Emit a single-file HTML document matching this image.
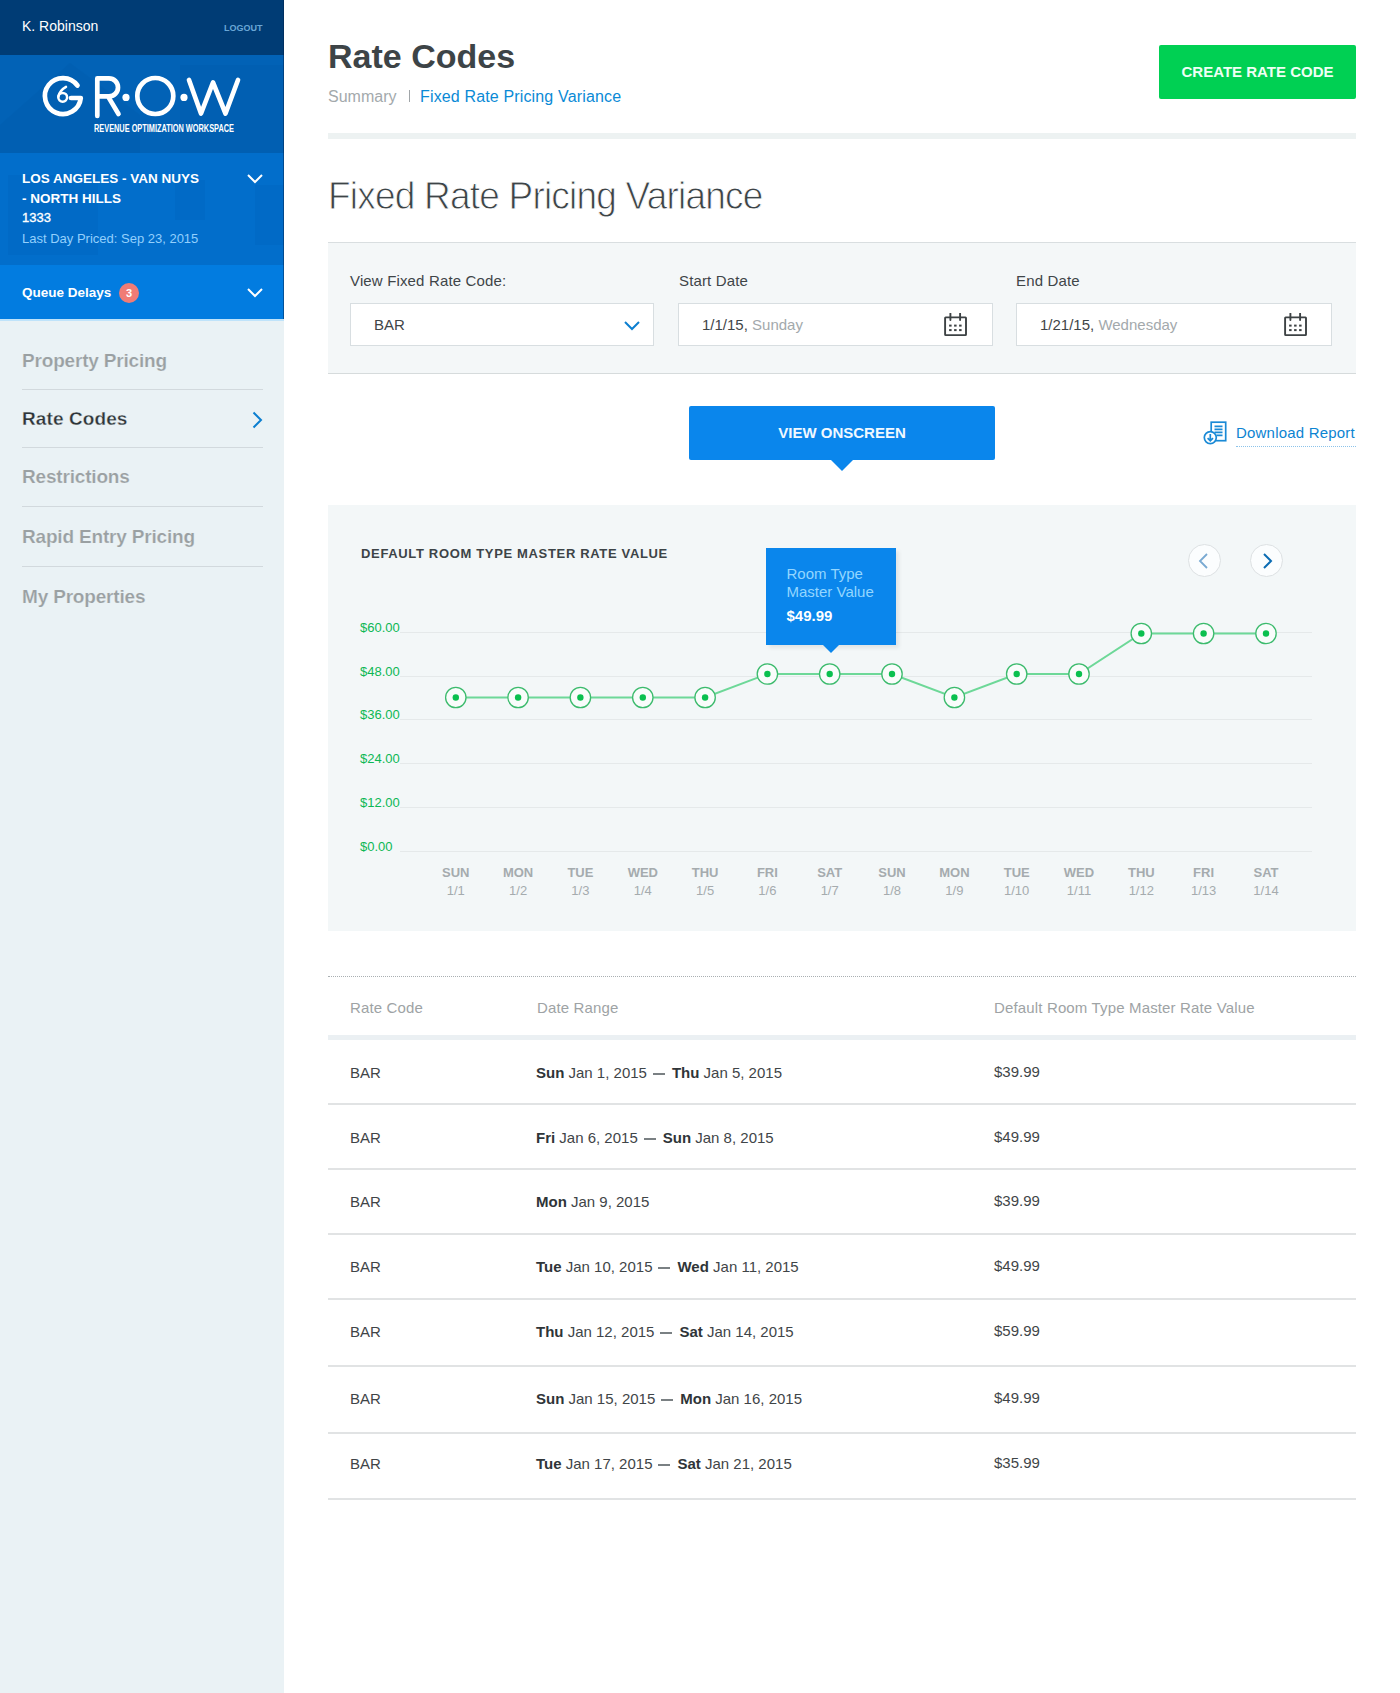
<!DOCTYPE html>
<html><head><meta charset="utf-8">
<style>
*{margin:0;padding:0;box-sizing:border-box}
html,body{width:1400px;height:1693px;overflow:hidden;background:#fff;font-family:"Liberation Sans",sans-serif;}
.a{position:absolute;white-space:nowrap}
#side{position:absolute;left:0;top:0;width:284px;height:1693px;background:#eaf2f5}
#hdr{position:absolute;left:0;top:0;width:284px;height:55px;background:#003c75}
#blue{position:absolute;left:0;top:55px;width:284px;height:210px;background:linear-gradient(#0262b6 0,#0262b6 98px,#026ecb 98px,#026ecb 210px);overflow:hidden}
#queue{position:absolute;left:0;top:265px;width:284px;height:55px;background:#027ce0}
.nav{position:absolute;left:22px;font-size:19px;font-weight:bold;color:#9aa0a2;letter-spacing:-0.18px;-webkit-text-stroke:0.2px #eaf2f5}
.sep{position:absolute;left:22px;width:241px;height:1px;background:#d2d9dd}
.lbl{position:absolute;font-size:15px;color:#3f4548;letter-spacing:0.15px}
.inp{position:absolute;top:303px;height:43px;background:#fff;border:1px solid #d8dee1}
.it{position:absolute;top:12px;font-size:15px;color:#3f4548}
.it span{color:#a3a9ac}
.yl{position:absolute;left:360px;font-size:13px;color:#0db755}
.gl{position:absolute;left:400px;width:912px;height:1px;background:#e5e9ea}
.xd{position:absolute;width:60px;text-align:center;font-size:13px;font-weight:bold;color:#a5abae}
.xn{position:absolute;width:60px;text-align:center;font-size:13px;color:#a5abae}
.th{position:absolute;top:999px;font-size:15px;color:#9ea3a5;letter-spacing:0.15px}
.rs{position:absolute;left:328px;width:1028px;height:2px;background:#e1e3e4}
.td{position:absolute;font-size:15px;color:#3f4548}
.td b{color:#2f3538}
.dash{display:inline-block;width:12px;height:2px;background:#7a8083;margin:0 7px 0 6px;vertical-align:3px}
</style></head><body>
<div id="side">
  <div id="hdr">
    <div class="a" style="left:22px;top:18px;font-size:14px;color:#fff">K. Robinson</div>
    <div class="a" style="left:224px;top:23px;font-size:9px;font-weight:bold;color:#6aa7d6">LOGOUT</div>
  </div>
  <div id="blue">
    <svg width="284" height="210" style="position:absolute;left:0;top:0">
      <g fill="#002a66" opacity="0.045">
        <polygon points="0,70 70,8 140,60 140,98 0,98"/>
        <rect x="180" y="10" width="104" height="88"/>
        <rect x="8" y="120" width="90" height="80"/>
        <rect x="175" y="125" width="30" height="40"/>
        <rect x="255" y="130" width="29" height="60"/>
      </g>
    </svg>
  </div>
  <div id="queue"></div>
  <div style="position:absolute;left:0;top:319px;width:284px;height:2px;background:#bfe3fa"></div>
  <div style="position:absolute;left:283px;top:0;width:1px;height:319px;background:rgba(0,30,70,0.45)"></div>
  <!-- logo -->
  <svg class="a" style="left:0;top:55px" width="284" height="100" viewBox="0 55 284 100">
    <g fill="none" stroke="#fff" stroke-width="4.7" stroke-linecap="round" stroke-linejoin="round">
      <path d="M77.5 85.5 A18 18 0 1 0 80.8 98 H71"/>
      <path d="M97.3 116 V78.4 H109 A9 9 0 0 1 109 96.4 H97.3 M108 96.4 L118.5 114"/>
      <circle cx="155.3" cy="96" r="18"/>
      <path d="M189 80 L201 113.5 L213 82.5 L225.5 113.5 L238 80"/>
    </g>
    <g fill="none" stroke="#fff" stroke-width="2.5" stroke-linecap="round"><circle cx="62.7" cy="97.3" r="4.4"/><path d="M66 86.8 Q59.5 90.5 58.4 96.5"/></g>
    <g fill="#fff"><circle cx="126" cy="97.4" r="3.6"/><circle cx="184" cy="97.4" r="3.6"/></g>
    <text x="94" y="132" font-family="Liberation Sans" font-size="10" font-weight="bold" fill="#fff" textLength="140" lengthAdjust="spacingAndGlyphs">REVENUE OPTIMIZATION WORKSPACE</text>
  </svg>
  <div class="a" style="left:22px;top:169px;font-size:13.5px;font-weight:bold;color:#fff;line-height:20px">LOS ANGELES - VAN NUYS<br>- NORTH HILLS</div>
  <div class="a" style="left:22px;top:210px;font-size:13px;color:#fff;-webkit-text-stroke:0.35px #fff">1333</div>
  <div class="a" style="left:22px;top:231px;font-size:13px;color:#93d0fd">Last Day Priced: Sep 23, 2015</div>
  <svg class="a" style="left:246px;top:173px" width="18" height="12"><path d="M2 2 L9 9 L16 2" fill="none" stroke="#fff" stroke-width="2"/></svg>
  <div class="a" style="left:22px;top:285px;font-size:13.5px;font-weight:bold;color:#fff">Queue Delays</div>
  <div class="a" style="left:119px;top:283px;width:20px;height:20px;border-radius:50%;background:#f07c76;color:#fff;font-size:11px;text-align:center;line-height:20px;font-weight:bold">3</div>
  <svg class="a" style="left:246px;top:287px" width="18" height="12"><path d="M2 2 L9 9 L16 2" fill="none" stroke="#fff" stroke-width="2"/></svg>

  <div class="nav" style="top:350px">Property Pricing</div>
  <div class="sep" style="top:389px"></div>
  <div class="nav" style="top:408px;color:#2e3538;letter-spacing:0.1px;-webkit-text-stroke:0.3px #eaf2f5">Rate Codes</div>
  <svg class="a" style="left:250px;top:410px" width="14" height="20"><path d="M3.5 2.5 L11 10 L3.5 17.5" fill="none" stroke="#0c7fd0" stroke-width="2"/></svg>
  <div class="sep" style="top:447px"></div>
  <div class="nav" style="top:466px">Restrictions</div>
  <div class="sep" style="top:506px"></div>
  <div class="nav" style="top:526px">Rapid Entry Pricing</div>
  <div class="sep" style="top:566px"></div>
  <div class="nav" style="top:586px">My Properties</div>
</div>

<!-- main -->
<div class="a" style="left:328px;top:36.5px;font-size:34px;font-weight:bold;color:#3d4447">Rate Codes</div>
<div class="a" style="left:328px;top:87.5px;font-size:16px;color:#a3a9ac">Summary</div><div class="a" style="left:408.5px;top:89.5px;width:1.5px;height:12px;background:#a0a5a8"></div><div class="a" style="left:420px;top:87.5px;font-size:16px;color:#0a8ad6;letter-spacing:0.15px">Fixed Rate Pricing Variance</div>
<div class="a" style="left:1159px;top:45px;width:197px;height:54px;background:#00d053;border-radius:2px;color:#eefff4;font-size:15px;font-weight:bold;text-align:center;line-height:54px">CREATE RATE CODE</div>
<div class="a" style="left:328px;top:133px;width:1028px;height:6px;background:#edf2f2"></div>

<div class="a" style="left:328px;top:173px;font-size:39.5px;color:#3d4447;letter-spacing:-0.85px;-webkit-text-stroke:0.9px #fff;transform:scaleX(0.937);transform-origin:0 0">Fixed Rate Pricing Variance</div>

<div class="a" style="left:328px;top:242px;width:1028px;height:132px;background:#f4f7f8;border-top:1px solid #d9dee0;border-bottom:1px solid #d6dbdc"></div>
<div class="lbl" style="left:350px;top:272px">View Fixed Rate Code:</div>
<div class="lbl" style="left:679px;top:272px">Start Date</div>
<div class="lbl" style="left:1016px;top:272px">End Date</div>
<div class="inp" style="left:350px;width:304px">
  <div class="it" style="left:23px">BAR</div>
  <svg class="a" style="left:272px;top:16px" width="18" height="12"><path d="M2 2 L9 9 L16 2" fill="none" stroke="#0c7fd0" stroke-width="2"/></svg>
</div>
<div class="inp" style="left:678px;width:315px">
  <div class="it" style="left:23px">1/1/15, <span>Sunday</span></div>
  <svg class="a" style="left:264px;top:9px" width="26" height="26"><g fill="none" stroke="#3d4244" stroke-width="1.9"><rect x="2.1" y="4.4" width="20.9" height="17.7" rx="0.6"/><path d="M7.4 0.5 V7 M17.1 0.5 V7" stroke-linecap="round"/></g><g fill="#3d4244"><rect x="6.1" y="11.6" width="2.5" height="2"/><rect x="11.1" y="11.6" width="2.5" height="2"/><rect x="16.1" y="11.6" width="2.5" height="2"/><rect x="6.1" y="16.1" width="2.5" height="2"/><rect x="11.1" y="16.1" width="2.5" height="2"/><rect x="16.1" y="16.1" width="2.5" height="2"/></g></svg>
</div>
<div class="inp" style="left:1016px;width:316px">
  <div class="it" style="left:23px">1/21/15, <span>Wednesday</span></div>
  <svg class="a" style="left:266px;top:9px" width="26" height="26"><g fill="none" stroke="#3d4244" stroke-width="1.9"><rect x="2.1" y="4.4" width="20.9" height="17.7" rx="0.6"/><path d="M7.4 0.5 V7 M17.1 0.5 V7" stroke-linecap="round"/></g><g fill="#3d4244"><rect x="6.1" y="11.6" width="2.5" height="2"/><rect x="11.1" y="11.6" width="2.5" height="2"/><rect x="16.1" y="11.6" width="2.5" height="2"/><rect x="6.1" y="16.1" width="2.5" height="2"/><rect x="11.1" y="16.1" width="2.5" height="2"/><rect x="16.1" y="16.1" width="2.5" height="2"/></g></svg>
</div>

<div class="a" style="left:689px;top:406px;width:306px;height:54px;background:#0a86ec;border-radius:2px;color:#f0f8ff;font-size:15px;font-weight:bold;text-align:center;line-height:54px">VIEW ONSCREEN</div>
<svg class="a" style="left:830px;top:459px" width="24" height="13"><path d="M0 0 L24 0 L12 12 Z" fill="#0a86ec"/></svg>

<svg class="a" style="left:1200px;top:418px" width="30" height="30">
  <g fill="none" stroke="#1a8ad6" stroke-width="1.7">
    <rect x="11.2" y="4.2" width="14.5" height="18.5"/>
    <path d="M14.5 8.3 H22.5 M14.5 11.3 H22.5 M14.5 14.3 H22.5 M16.5 17.3 H22.5"/>
    <circle cx="10.3" cy="19.6" r="6" fill="#fff"/>
    <path d="M10.3 16 V22.6 M7.6 20.2 L10.3 22.8 L13 20.2"/>
  </g>
</svg>
<div class="a" style="left:1236px;top:424px;font-size:15px;color:#0c84d2;letter-spacing:0.2px">Download Report</div>
<div class="a" style="left:1236px;top:446px;width:120px;height:0;border-top:1px dotted #8cc3ea"></div>

<!-- chart -->
<div class="a" style="left:328px;top:505px;width:1028px;height:426px;background:#f3f7f8"></div>
<div class="a" style="left:361px;top:546px;font-size:13px;font-weight:bold;color:#3d4447;letter-spacing:0.66px">DEFAULT ROOM TYPE MASTER RATE VALUE</div>

<div class="gl" style="top:632px"></div>
<div class="gl" style="top:676px"></div>
<div class="gl" style="top:719px"></div>
<div class="gl" style="top:763px"></div>
<div class="gl" style="top:807px"></div>
<div class="gl" style="top:851px"></div>
<div class="yl" style="top:620px">$60.00</div>
<div class="yl" style="top:664px">$48.00</div>
<div class="yl" style="top:707px">$36.00</div>
<div class="yl" style="top:751px">$24.00</div>
<div class="yl" style="top:795px">$12.00</div>
<div class="yl" style="top:839px">$0.00</div>

<svg class="a" style="left:0;top:0" width="1400" height="1000" id="chart"><polyline fill="none" stroke="#6dd898" stroke-width="2" points="455.8,697.5 518.1,697.5 580.4,697.5 642.8,697.5 705.1,697.5 767.4,674.0 829.7,674.0 892.0,674.0 954.4,697.5 1016.7,674.0 1079.0,674.0 1141.3,633.5 1203.6,633.5 1266.0,633.5"/><circle cx="455.8" cy="697.5" r="10.2" fill="#f9fcfb" stroke="#3cbb6d" stroke-width="1.3"/><circle cx="455.8" cy="697.5" r="3.2" fill="#0bc04f"/><circle cx="518.1" cy="697.5" r="10.2" fill="#f9fcfb" stroke="#3cbb6d" stroke-width="1.3"/><circle cx="518.1" cy="697.5" r="3.2" fill="#0bc04f"/><circle cx="580.4" cy="697.5" r="10.2" fill="#f9fcfb" stroke="#3cbb6d" stroke-width="1.3"/><circle cx="580.4" cy="697.5" r="3.2" fill="#0bc04f"/><circle cx="642.8" cy="697.5" r="10.2" fill="#f9fcfb" stroke="#3cbb6d" stroke-width="1.3"/><circle cx="642.8" cy="697.5" r="3.2" fill="#0bc04f"/><circle cx="705.1" cy="697.5" r="10.2" fill="#f9fcfb" stroke="#3cbb6d" stroke-width="1.3"/><circle cx="705.1" cy="697.5" r="3.2" fill="#0bc04f"/><circle cx="767.4" cy="674.0" r="10.2" fill="#f9fcfb" stroke="#3cbb6d" stroke-width="1.3"/><circle cx="767.4" cy="674.0" r="3.2" fill="#0bc04f"/><circle cx="829.7" cy="674.0" r="10.2" fill="#f9fcfb" stroke="#3cbb6d" stroke-width="1.3"/><circle cx="829.7" cy="674.0" r="3.2" fill="#0bc04f"/><circle cx="892.0" cy="674.0" r="10.2" fill="#f9fcfb" stroke="#3cbb6d" stroke-width="1.3"/><circle cx="892.0" cy="674.0" r="3.2" fill="#0bc04f"/><circle cx="954.4" cy="697.5" r="10.2" fill="#f9fcfb" stroke="#3cbb6d" stroke-width="1.3"/><circle cx="954.4" cy="697.5" r="3.2" fill="#0bc04f"/><circle cx="1016.7" cy="674.0" r="10.2" fill="#f9fcfb" stroke="#3cbb6d" stroke-width="1.3"/><circle cx="1016.7" cy="674.0" r="3.2" fill="#0bc04f"/><circle cx="1079.0" cy="674.0" r="10.2" fill="#f9fcfb" stroke="#3cbb6d" stroke-width="1.3"/><circle cx="1079.0" cy="674.0" r="3.2" fill="#0bc04f"/><circle cx="1141.3" cy="633.5" r="10.2" fill="#f9fcfb" stroke="#3cbb6d" stroke-width="1.3"/><circle cx="1141.3" cy="633.5" r="3.2" fill="#0bc04f"/><circle cx="1203.6" cy="633.5" r="10.2" fill="#f9fcfb" stroke="#3cbb6d" stroke-width="1.3"/><circle cx="1203.6" cy="633.5" r="3.2" fill="#0bc04f"/><circle cx="1266.0" cy="633.5" r="10.2" fill="#f9fcfb" stroke="#3cbb6d" stroke-width="1.3"/><circle cx="1266.0" cy="633.5" r="3.2" fill="#0bc04f"/></svg>

<!-- tooltip -->
<div class="a" style="left:766px;top:548px;width:130px;height:97px;background:#0a86ec;box-shadow:3px 3px 4px rgba(0,0,0,0.08)"></div>
<svg class="a" style="left:822px;top:644px" width="18" height="9"><path d="M0 0 L18 0 L9 9 Z" fill="#0a86ec"/></svg>
<div class="a" style="left:786.5px;top:565px;font-size:15px;line-height:18.3px;color:#93d6ff">Room Type<br>Master Value</div>
<div class="a" style="left:786.5px;top:607px;font-size:15px;font-weight:bold;color:#fff">$49.99</div>

<!-- nav circles -->
<div class="a" style="left:1187.5px;top:544px;width:33px;height:33px;border-radius:50%;background:#fbfdfe;border:1px solid #dde1e3"></div>
<div class="a" style="left:1249.5px;top:544px;width:33px;height:33px;border-radius:50%;background:#fbfdfe;border:1px solid #dde1e3"></div>
<svg class="a" style="left:1196px;top:551px" width="16" height="20"><path d="M11 3 L4 10 L11 17" fill="none" stroke="#78a9d2" stroke-width="1.8"/></svg>
<svg class="a" style="left:1259px;top:551px" width="16" height="20"><path d="M5 3 L12 10 L5 17" fill="none" stroke="#0b6cb3" stroke-width="2"/></svg>

<div class="xd" style="left:425.8px;top:865px">SUN</div><div class="xn" style="left:425.8px;top:883px">1/1</div>
<div class="xd" style="left:488.1px;top:865px">MON</div><div class="xn" style="left:488.1px;top:883px">1/2</div>
<div class="xd" style="left:550.4px;top:865px">TUE</div><div class="xn" style="left:550.4px;top:883px">1/3</div>
<div class="xd" style="left:612.8px;top:865px">WED</div><div class="xn" style="left:612.8px;top:883px">1/4</div>
<div class="xd" style="left:675.1px;top:865px">THU</div><div class="xn" style="left:675.1px;top:883px">1/5</div>
<div class="xd" style="left:737.4px;top:865px">FRI</div><div class="xn" style="left:737.4px;top:883px">1/6</div>
<div class="xd" style="left:799.7px;top:865px">SAT</div><div class="xn" style="left:799.7px;top:883px">1/7</div>
<div class="xd" style="left:862.0px;top:865px">SUN</div><div class="xn" style="left:862.0px;top:883px">1/8</div>
<div class="xd" style="left:924.4px;top:865px">MON</div><div class="xn" style="left:924.4px;top:883px">1/9</div>
<div class="xd" style="left:986.7px;top:865px">TUE</div><div class="xn" style="left:986.7px;top:883px">1/10</div>
<div class="xd" style="left:1049.0px;top:865px">WED</div><div class="xn" style="left:1049.0px;top:883px">1/11</div>
<div class="xd" style="left:1111.3px;top:865px">THU</div><div class="xn" style="left:1111.3px;top:883px">1/12</div>
<div class="xd" style="left:1173.6px;top:865px">FRI</div><div class="xn" style="left:1173.6px;top:883px">1/13</div>
<div class="xd" style="left:1236.0px;top:865px">SAT</div><div class="xn" style="left:1236.0px;top:883px">1/14</div>


<!-- table -->
<div class="a" style="left:328px;top:976px;width:1028px;height:0;border-top:1px dotted #a9afb2"></div>
<div class="th" style="left:350px">Rate Code</div>
<div class="th" style="left:537px">Date Range</div>
<div class="th" style="left:994px">Default Room Type Master Rate Value</div>
<div class="a" style="left:328px;top:1035px;width:1028px;height:5px;background:#ebf0f3"></div>
<div class="td" style="left:350px;top:1064.0px">BAR</div><div class="td" style="left:536px;top:1064.0px"><b>Sun</b> Jan 1, 2015<span class="dash"></span><b>Thu</b> Jan 5, 2015</div><div class="td" style="left:994px;top:1063.0px">$39.99</div><div class="rs" style="top:1103px"></div>
<div class="td" style="left:350px;top:1129.0px">BAR</div><div class="td" style="left:536px;top:1129.0px"><b>Fri</b> Jan 6, 2015<span class="dash"></span><b>Sun</b> Jan 8, 2015</div><div class="td" style="left:994px;top:1128.0px">$49.99</div><div class="rs" style="top:1168px"></div>
<div class="td" style="left:350px;top:1193.0px">BAR</div><div class="td" style="left:536px;top:1193.0px"><b>Mon</b> Jan 9, 2015</div><div class="td" style="left:994px;top:1192.0px">$39.99</div><div class="rs" style="top:1233px"></div>
<div class="td" style="left:350px;top:1258.0px">BAR</div><div class="td" style="left:536px;top:1258.0px"><b>Tue</b> Jan 10, 2015<span class="dash"></span><b>Wed</b> Jan 11, 2015</div><div class="td" style="left:994px;top:1257.0px">$49.99</div><div class="rs" style="top:1298px"></div>
<div class="td" style="left:350px;top:1323.0px">BAR</div><div class="td" style="left:536px;top:1323.0px"><b>Thu</b> Jan 12, 2015<span class="dash"></span><b>Sat</b> Jan 14, 2015</div><div class="td" style="left:994px;top:1322.0px">$59.99</div><div class="rs" style="top:1365px"></div>
<div class="td" style="left:350px;top:1390.0px">BAR</div><div class="td" style="left:536px;top:1390.0px"><b>Sun</b> Jan 15, 2015<span class="dash"></span><b>Mon</b> Jan 16, 2015</div><div class="td" style="left:994px;top:1389.0px">$49.99</div><div class="rs" style="top:1432px"></div>
<div class="td" style="left:350px;top:1455.0px">BAR</div><div class="td" style="left:536px;top:1455.0px"><b>Tue</b> Jan 17, 2015<span class="dash"></span><b>Sat</b> Jan 21, 2015</div><div class="td" style="left:994px;top:1454.0px">$35.99</div><div class="rs" style="top:1498px"></div>



</body></html>
